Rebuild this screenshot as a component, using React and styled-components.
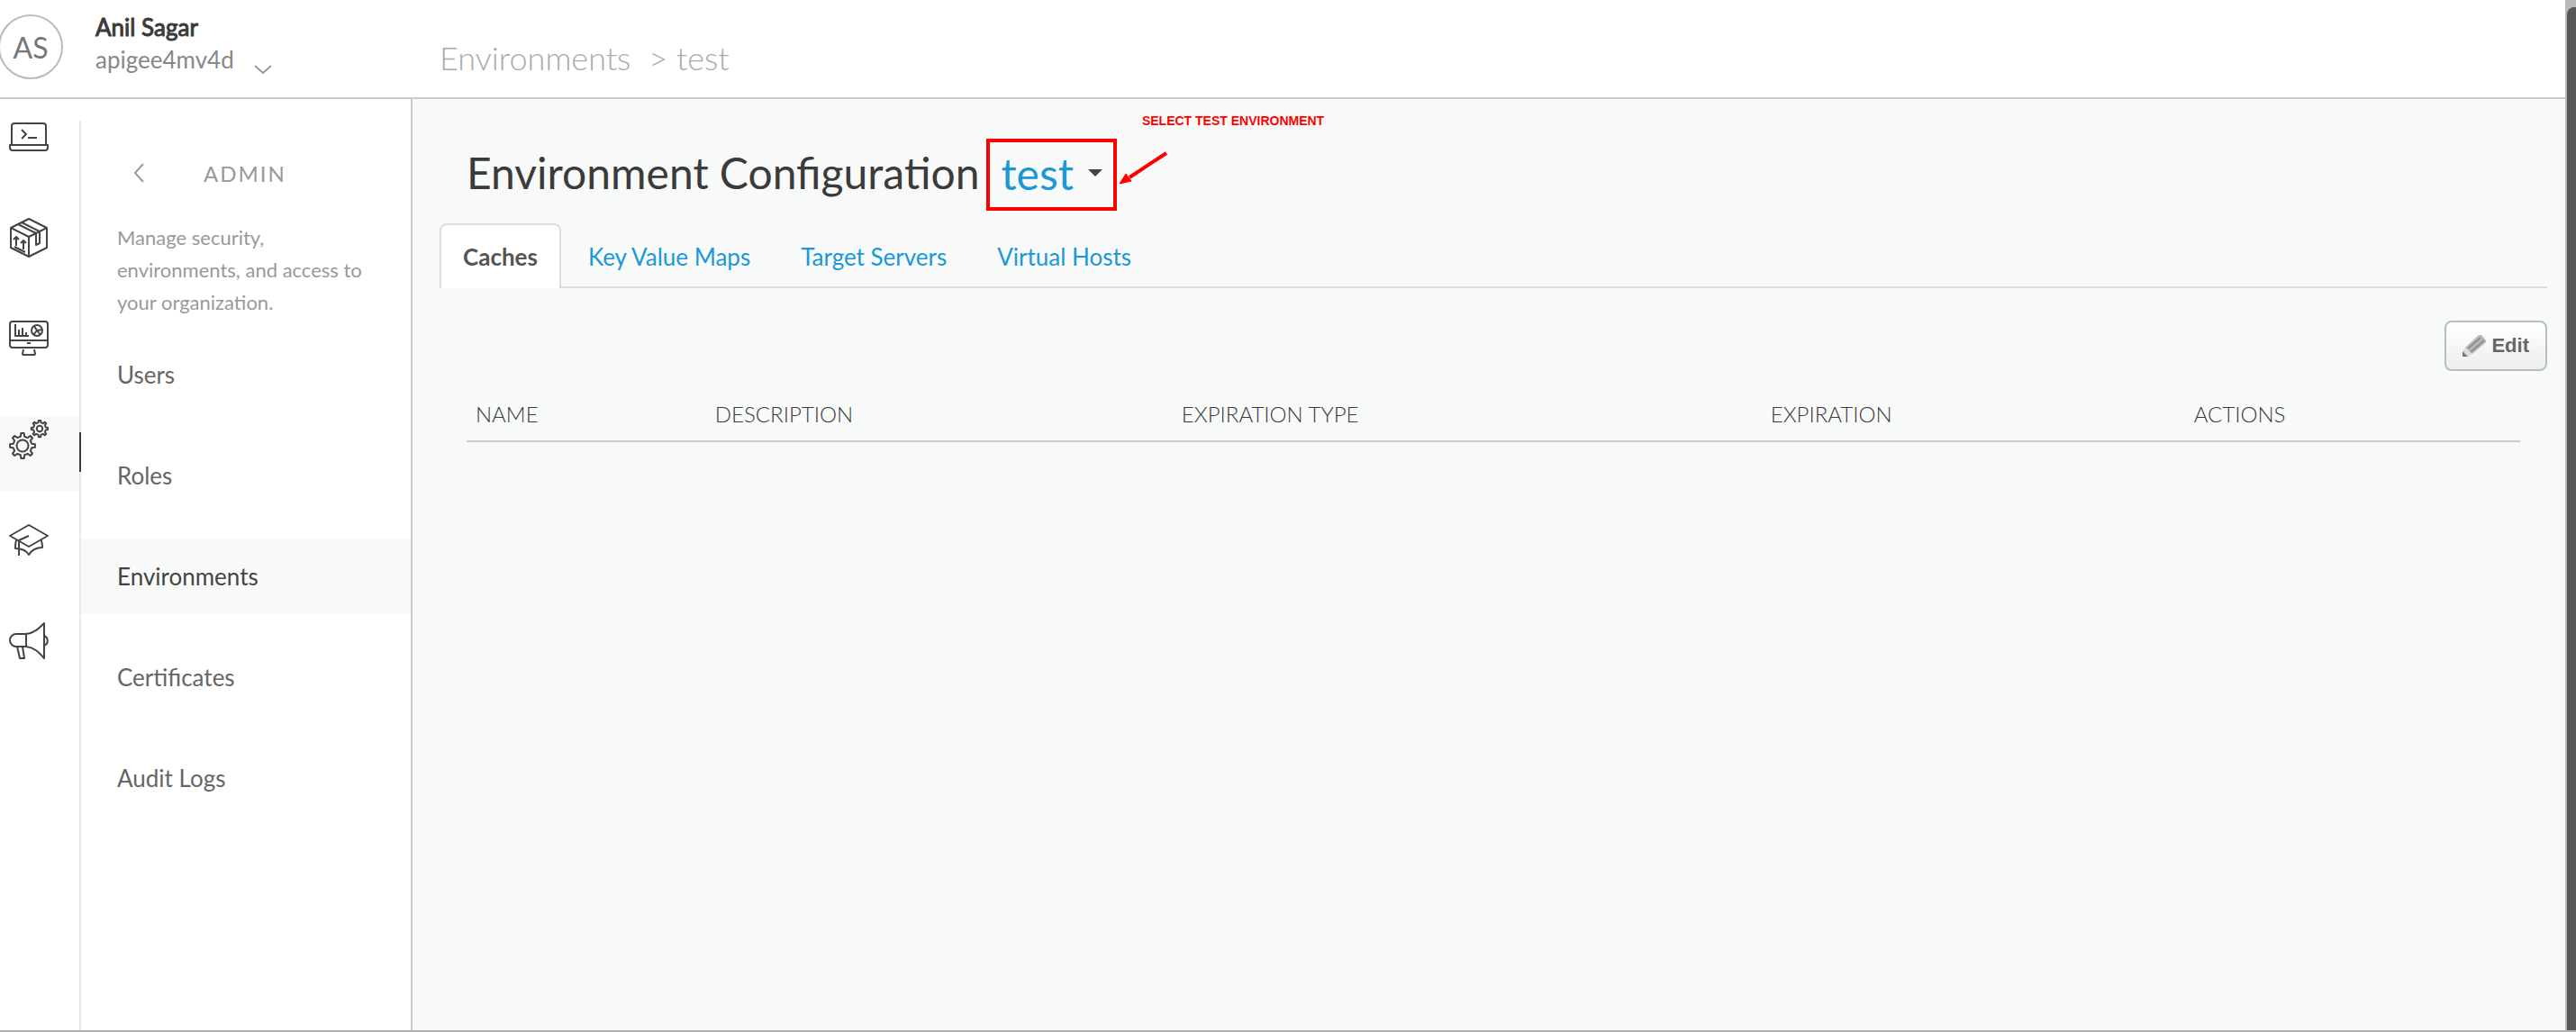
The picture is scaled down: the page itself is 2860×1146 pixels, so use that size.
import React from "react";
import styled, { createGlobalStyle } from "styled-components";

const navItems = ["Users", "Roles", "Environments", "Certificates", "Audit Logs"];
const tabs = ["Caches", "Key Value Maps", "Target Servers", "Virtual Hosts"];
const columns = [
  { label: "NAME", width: "11.66%" },
  { label: "DESCRIPTION", width: "22.72%" },
  { label: "EXPIRATION TYPE", width: "28.68%" },
  { label: "EXPIRATION", width: "20.61%" },
  { label: "ACTIONS", width: "16.33%" },
];

// outline of a cog wheel with rounded-off teeth
const cogPath = (cx, cy, outer, inner, teeth) => {
  const step = (Math.PI * 2) / teeth;
  const points = [];
  for (let i = 0; i < teeth; i++) {
    const a = i * step - Math.PI / 2;
    [
      [inner, -0.27],
      [outer, -0.15],
      [outer, 0.15],
      [inner, 0.27],
    ].forEach(([r, k]) => {
      const x = cx + r * Math.cos(a + k * step);
      const y = cy + r * Math.sin(a + k * step);
      points.push(`${x.toFixed(2)} ${y.toFixed(2)}`);
    });
  }
  return `M${points.join("L")}Z`;
};

const LaptopIcon = () => (
  <RailSvg viewBox="0 0 44 44">
    <path d="M3 31V10a3 3 0 0 1 3-3h32a3 3 0 0 1 3 3v21" />
    <path d="M1 31h42v3a3 3 0 0 1-3 3H4a3 3 0 0 1-3-3z" />
    <path d="M14 14l5 5-5 5M21 23h10" />
  </RailSvg>
);

const BoxIcon = () => (
  <RailSvg viewBox="0 0 44 44">
    <path d="M22 1l20 10v22L22 43 2 33V11z" />
    <path d="M2 11l20 10 20-10M22 21v22M14 5l20 10M10 7l20 10M30 17v13l4-2V15" />
    <path d="M8 31V21M5 24l3-3 3 3M16 35V25M13 28l3-3 3 3M6 32l12 6" />
  </RailSvg>
);

const MonitorIcon = () => (
  <RailSvg viewBox="0 0 44 44">
    <rect x="1" y="3" width="42" height="29" rx="3" />
    <path d="M1 24h42M20 27h4M16 34l-1 5a1 1 0 0 0 1 1h12a1 1 0 0 0 1-1l-1-5" />
    <path d="M7 6v13h15M11 12v7M15 10v9M19 15v4" />
    <circle cx="31" cy="13" r="6" />
    <path d="M28 8l3 5 6-1M31 13l-4 5M31 13l4 5" />
  </RailSvg>
);

const GearsIcon = () => (
  <RailSvg viewBox="0 0 44 44">
    <path d={cogPath(15, 29, 14, 10.5, 8)} />
    <circle cx="15" cy="29" r="6.5" />
    <path d={cogPath(34, 10, 9.3, 7, 8)} />
    <circle cx="34" cy="10" r="3.2" />
  </RailSvg>
);

const CapIcon = () => (
  <RailSvg viewBox="0 0 44 44">
    <path d="M22 5l21 12-21 12L1 17z" />
    <path d="M22 17l-11 5v17M8 22c-1 3-1 6-1 9 7 0 12 2 15 7 3-5 8-8 15-8 0-3 0-6-2-9" />
  </RailSvg>
);

const MegaphoneIcon = () => (
  <RailSvg viewBox="0 0 44 44">
    <path d="M19 14H8a7 7 0 0 0 0 14h11z" />
    <path d="M19 14c9-1 14-6 20-12v39c-6-7-11-12-20-13M39 16c5 2 5 9 0 11" />
    <path d="M9 28l3 13h5l-2-13" />
  </RailSvg>
);

const railItems = [
  { label: "Develop", icon: <LaptopIcon /> },
  { label: "Publish", icon: <BoxIcon /> },
  { label: "Analyze", icon: <MonitorIcon /> },
  { label: "Admin", icon: <GearsIcon />, active: true },
  { label: "Learn", icon: <CapIcon /> },
  { label: "Announcements", icon: <MegaphoneIcon /> },
];

const App = () => {
  return (
    <Page>
      <GlobalStyle />
      <Screen>
        <Header>
          <Account type="button">
            <Avatar>AS</Avatar>
            <AccountText>
              <UserName>Anil Sagar</UserName>
              <OrgName>apigee4mv4d</OrgName>
            </AccountText>
            <Chevron viewBox="0 0 20 10">
              <path d="M1 1l9 8 9-8" />
            </Chevron>
          </Account>
          <Breadcrumb aria-label="Breadcrumb">
            <a href="#environments">Environments</a>
            <span>&gt; test</span>
          </Breadcrumb>
        </Header>
        <Body>
          <Rail aria-label="Sections">
            {railItems.map((item) => (
              <RailLink
                key={item.label}
                href={`#${item.label.toLowerCase()}`}
                aria-label={item.label}
                $active={item.active}
              >
                {item.icon}
              </RailLink>
            ))}
          </Rail>
          <Side>
            <SideHeader>
              <BackButton type="button" aria-label="Back">
                <svg width="12" height="22" viewBox="0 0 12 22">
                  <path d="M11 1L2 11l9 10" />
                </svg>
              </BackButton>
              <SideTitle>ADMIN</SideTitle>
            </SideHeader>
            <SideText>
              Manage security, environments, and access to your organization.
            </SideText>
            <SideNav>
              {navItems.map((item) => (
                <SideLink key={item} href="#nav" $active={item === "Environments"}>
                  {item}
                </SideLink>
              ))}
            </SideNav>
          </Side>
          <Main>
            <TitleRow>
              <Title>Environment Configuration</Title>
              <EnvButton type="button">
                test
                <Caret />
              </EnvButton>
              <Callout>
                <CalloutText>SELECT TEST ENVIRONMENT</CalloutText>
                <CalloutArrow viewBox="0 0 56 38">
                  <line x1="53" y1="2" x2="12" y2="29" />
                  <polygon points="1,36 8,25 14,33" />
                </CalloutArrow>
              </Callout>
            </TitleRow>
            <Tabs>
              {tabs.map((tab, i) => (
                <Tab key={tab} href="#tab" $active={i === 0}>
                  {tab}
                </Tab>
              ))}
            </Tabs>
            <Toolbar>
              <EditButton type="button">
                <PencilIcon viewBox="0 0 26 26">
                  <path fill="#b9b9b9" d="M3 15L18 1l3 0 5 6 0 2L11 22z" />
                  <path stroke="#8d8d8d" strokeWidth="2" d="M6 16L20 4M9 20L24 7" />
                  <path fill="#dcdcdc" d="M3 15l8 7-5 3-6 0 0-6z" />
                  <path fill="#777" d="M0 19l6 6H0z" />
                </PencilIcon>
                Edit
              </EditButton>
            </Toolbar>
            <Table>
              <thead>
                <tr>
                  {columns.map((col) => (
                    <HeadCell key={col.label} scope="col" $width={col.width}>
                      {col.label}
                    </HeadCell>
                  ))}
                </tr>
              </thead>
            </Table>
          </Main>
        </Body>
      </Screen>
      <ScrollTrack>
        <ScrollThumb />
      </ScrollTrack>
    </Page>
  );
};

export default App;

const GlobalStyle = createGlobalStyle`
  * {
    box-sizing: border-box;
  }

  body {
    margin: 0;
    background: #fff;
    color: #3b3b3b;
    font-family: Lato, "Liberation Sans", sans-serif;
    font-size: 26px;
  }

  a {
    color: inherit;
    text-decoration: none;
  }

  button {
    border: 0;
    background: none;
    padding: 0;
    color: inherit;
    font: inherit;
    cursor: pointer;
  }
`;

const Page = styled.div`
  display: flex;
  min-height: 100vh;
  border-bottom: 2px solid #b0b0b0;
`;

const Screen = styled.div`
  flex: 1;
  display: flex;
  flex-direction: column;
`;

const Header = styled.header`
  display: flex;
  height: 110px;
  border-bottom: 2px solid #ccc;
`;

const Account = styled.button`
  display: flex;
  align-items: flex-start;
  width: 488px;
  padding-top: 16px;
  text-align: left;
`;

const Avatar = styled.span`
  width: 72px;
  height: 72px;
  margin-left: -2px;
  border: 2px solid #bbb;
  border-radius: 50%;
  color: #777;
  font-size: 32px;
  line-height: 70px;
  text-align: center;
`;

const AccountText = styled.span`
  display: flex;
  flex-direction: column;
  margin: -4px 22px 0 36px;
  line-height: 36px;
`;

const UserName = styled.span`
  -webkit-text-stroke: 1px currentColor;
`;

const OrgName = styled.span`
  color: #888;
`;

const Chevron = styled.svg`
  width: 20px;
  height: 10px;
  margin-top: 56px;
  fill: none;
  stroke: #999;
  stroke-width: 2;
`;

const Breadcrumb = styled.nav`
  display: flex;
  gap: 20px;
  padding-top: 42px;
  color: #aaa;
  font-size: 36px;
  font-weight: 300;
  line-height: 44px;
`;

const Body = styled.div`
  flex: 1;
  display: flex;
`;

const Rail = styled.nav`
  display: flex;
  flex-direction: column;
  gap: 28px;
  width: 90px;
  margin-top: 24px;
  border-right: 2px solid #e8e8e8;

  a:first-child {
    margin-top: -8px;
  }
`;

const RailLink = styled.a`
  position: relative;
  height: 84px;
  padding: 4px 10px;
  background: ${({ $active }) => ($active ? "#f8faf9" : "transparent")};

  &::after {
    content: "";
    display: ${({ $active }) => ($active ? "block" : "none")};
    position: absolute;
    top: 18px;
    right: -2px;
    width: 2px;
    height: 44px;
    background: #3b3b3b;
  }
`;

const RailSvg = styled.svg`
  display: block;
  width: 44px;
  height: 44px;
  fill: none;
  stroke: #444;
  stroke-width: 2;
  stroke-linejoin: round;
`;

const Side = styled.aside`
  width: 368px;
  padding-top: 62px;
  border-right: 2px solid #ccc;
`;

const SideHeader = styled.div`
  display: flex;
  align-items: center;
  gap: 66px;
  height: 40px;
  padding-left: 58px;
`;

const BackButton = styled.button`
  display: flex;

  path {
    fill: none;
    stroke: #999;
    stroke-width: 2;
  }
`;

const SideTitle = styled.h2`
  margin: 0;
  color: #999;
  font-size: 24px;
  font-weight: 400;
  letter-spacing: 2px;
`;

const SideText = styled.p`
  margin: 34px 0 20px;
  padding: 0 50px 0 40px;
  color: #999;
  font-size: 22px;
  line-height: 36px;
`;

const SideNav = styled.nav`
  display: flex;
  flex-direction: column;
  gap: 28px;
`;

const SideLink = styled.a`
  padding-left: 40px;
  background: ${({ $active }) => ($active ? "#f8faf9" : "transparent")};
  color: ${({ $active }) => ($active ? "#444" : "#666")};
  line-height: 84px;
`;

const Main = styled.main`
  flex: 1;
  padding: 44px 20px 0 30px;
  background: #f8faf9;
`;

const TitleRow = styled.div`
  position: relative;
  display: flex;
  padding-left: 30px;
`;

const Title = styled.h1`
  margin: 0;
  font-size: 48px;
  font-weight: 400;
  line-height: 76px;
`;

const EnvButton = styled.button`
  display: flex;
  align-items: center;
  gap: 16px;
  height: 80px;
  margin-left: 8px;
  padding: 0 12px 4px;
  border: 4px solid #f00;
  color: #1b98d5;
  font-size: 48px;
`;

const Caret = styled.span`
  border: 8px solid transparent;
  border-top-color: #444;
  border-bottom: 0;
`;

const Callout = styled.div`
  position: relative;
`;

const CalloutText = styled.span`
  position: absolute;
  top: -30px;
  left: 28px;
  color: #f00;
  font-family: "Liberation Sans", Arial, sans-serif;
  font-size: 14px;
  font-weight: 700;
  line-height: 20px;
  white-space: nowrap;
`;

const CalloutArrow = styled.svg`
  position: absolute;
  top: 14px;
  left: 2px;
  width: 56px;
  height: 38px;
  fill: #f00;
  stroke: #f00;

  line {
    stroke-width: 4;
  }
`;

const Tabs = styled.nav`
  display: flex;
  margin-top: 14px;
  border-bottom: 2px solid #ddd;
`;

const Tab = styled.a`
  height: 72px;
  margin-right: 4px;
  margin-bottom: -2px;
  padding: 0 24px;
  border: 2px solid ${({ $active }) => ($active ? "#ddd" : "transparent")};
  border-bottom: 0;
  border-radius: 8px 8px 0 0;
  background: ${({ $active }) => ($active ? "#fff" : "transparent")};
  color: ${({ $active }) => ($active ? "#555" : "#1b98d5")};
  font-weight: ${({ $active }) => ($active ? 700 : 400)};
  line-height: 70px;
`;

const Toolbar = styled.div`
  display: flex;
  justify-content: flex-end;
  padding-top: 36px;
`;

const EditButton = styled.button`
  display: flex;
  align-items: center;
  gap: 6px;
  height: 56px;
  padding: 0 18px;
  border: 2px solid #b5bfc6;
  border-radius: 8px;
  background: linear-gradient(#fff, #eee);
  color: #666;
  font-family: "Liberation Sans", Arial, sans-serif;
  font-size: 22px;
  font-weight: 700;
`;

const PencilIcon = styled.svg`
  width: 26px;
  height: 26px;
`;

const Table = styled.table`
  width: calc(100% - 60px);
  margin: 18px 30px 0;
  border-collapse: collapse;
  table-layout: fixed;
`;

const HeadCell = styled.th`
  width: ${({ $width }) => $width};
  height: 60px;
  padding: 0 10px;
  border-bottom: 2px solid #ccc;
  font-size: 24px;
  font-weight: 300;
  text-align: left;
`;

const ScrollTrack = styled.div`
  display: flex;
  width: 12px;
  padding: 8px 0 0 2px;
  background: #b8b8b8;
`;

const ScrollThumb = styled.div`
  flex: 1;
  border-radius: 8px 0 0 0;
  background: #585858;
`;
